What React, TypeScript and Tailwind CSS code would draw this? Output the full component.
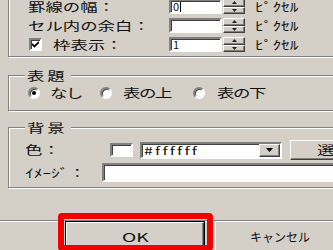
import React from 'react';

// classic win9x bevels
const sunken =
  'border-2 border-t-[#808080] border-l-[#808080] border-b-white border-r-white shadow-[inset_1px_1px_0_#404040] bg-white';
const raised =
  'border border-t-white border-l-white border-b-[#404040] border-r-[#404040] shadow-[inset_-1px_-1px_0_#808080] bg-[#d4d0c8]';

const Wide: React.FC<{ children: React.ReactNode; className?: string }> = ({ children, className = '' }) => (
  <span className={`inline-block origin-left scale-x-[1.45] whitespace-nowrap ${className}`}>{children}</span>
);

const Group: React.FC<{ legend?: string; className?: string; children: React.ReactNode }> = ({
  legend,
  className = '',
  children,
}) => (
  <div
    className={`flex w-[340px] shrink-0 flex-col border border-[#808080] shadow-[1px_1px_0_#fff,inset_1px_1px_0_#fff] ${className}`}
  >
    {legend && (
      <div className="-mt-[7px] ml-[16px] h-[14px] w-[46px] bg-[#d4d0c8] px-[2px] text-[12px] leading-[14px]">
        <Wide className="tracking-[2px]">{legend}</Wide>
      </div>
    )}
    {children}
  </div>
);

const Spinner = () => (
  <div className="ml-[1px] flex h-[15px] w-[22px] shrink-0 flex-col">
    <div className={`flex flex-1 items-center justify-center ${raised}`}>
      <svg width="5" height="3" viewBox="0 0 5 3">
        <path d="M2.5 0 L5 3 L0 3 Z" fill="#222" />
      </svg>
    </div>
    <div className={`flex flex-1 items-center justify-center ${raised}`}>
      <svg width="5" height="3" viewBox="0 0 5 3">
        <path d="M0 0 L5 0 L2.5 3 Z" fill="#222" />
      </svg>
    </div>
  </div>
);

const NumField: React.FC<{ value?: string; caret?: boolean }> = ({ value = '', caret }) => (
  <div className={`flex h-[15px] w-[53px] shrink-0 items-center pl-[2px] text-[11px] leading-none ${sunken}`}>
    <span>{value}</span>
    {caret && <span className="ml-[1px] h-[10px] w-[1px] bg-black" />}
  </div>
);

const Radio: React.FC<{ checked?: boolean }> = ({ checked }) => (
  <div className="flex h-[12px] w-[12px] shrink-0 items-center justify-center rounded-full border-2 border-t-[#808080] border-l-[#808080] border-b-white border-r-white bg-white shadow-[inset_1px_1px_0_#404040]">
    {checked && <div className="h-[4px] w-[4px] rounded-full bg-black" />}
  </div>
);

const Pixel = () => (
  <div className="ml-[10px] shrink-0">
    <Wide className="scale-x-[1.3]">ﾋﾟｸｾﾙ</Wide>
  </div>
);

export default function App() {
  return (
    <div className="relative flex h-[250px] w-[333px] flex-col overflow-hidden bg-[#d4d0c8] pl-[8px] font-['Noto_Sans_CJK_JP','Noto_Sans',sans-serif] text-[#111]">
      {/* 罫線 group (top cut off) */}
      <Group className="-mt-[11px] pt-[9px] pb-[4px]">
        <div className="flex flex-col gap-[4px] pl-[19px] text-[12px]">
          <div className="flex h-[15px] items-center">
            <div className="w-[141px] shrink-0">
              <Wide>罫線の幅：</Wide>
            </div>
            <NumField value="0" caret />
            <Spinner />
            <Pixel />
          </div>
          <div className="flex h-[15px] items-center">
            <div className="w-[141px] shrink-0">
              <Wide>セル内の余白：</Wide>
            </div>
            <NumField />
            <Spinner />
            <Pixel />
          </div>
          <div className="flex h-[15px] items-center">
            <div className="flex w-[141px] shrink-0 items-center">
              <div className={`ml-[1px] flex h-[13px] w-[13px] items-center justify-center ${sunken}`}>
                <svg width="7" height="7" viewBox="0 0 7 7">
                  <path d="M0 3 L2.5 5.5 L7 1" stroke="#000" strokeWidth="1.8" fill="none" />
                </svg>
              </div>
              <div className="ml-[11px]">
                <Wide>枠表示：</Wide>
              </div>
            </div>
            <NumField value="1" />
            <Spinner />
            <Pixel />
          </div>
        </div>
      </Group>

      {/* 表題 */}
      <Group legend="表題" className="mt-[18px] pb-[9px]">
        <div className="mt-[2px] flex h-[16px] items-center pl-[19px] text-[12px]">
          <div className="flex w-[72px] shrink-0 items-center">
            <Radio checked />
            <div className="ml-[10px]">
              <Wide className="tracking-[-1px]">なし</Wide>
            </div>
          </div>
          <div className="flex w-[93px] shrink-0 items-center">
            <Radio />
            <div className="ml-[11px]">
              <Wide className="tracking-[-1px]">表の上</Wide>
            </div>
          </div>
          <div className="flex shrink-0 items-center">
            <Radio />
            <div className="ml-[12px]">
              <Wide className="tracking-[-1px]">表の下</Wide>
            </div>
          </div>
        </div>
      </Group>

      {/* 背景 */}
      <Group legend="背景" className="mt-[16px] pb-[5px]">
        <div className="mt-[5px] flex h-[20px] items-center pl-[16px] text-[12px]">
          <div className="w-[85px] shrink-0">
            <Wide>色：</Wide>
          </div>
          <div className={`h-[14px] w-[23px] shrink-0 ${sunken}`} />
          <div className={`ml-[7px] flex h-[17px] w-[142px] shrink-0 items-center ${sunken}`}>
            <div className="flex-1 pl-[2px] text-[11px] leading-none">
              <Wide className="tracking-[1.5px]">#ffffff</Wide>
            </div>
            <div className={`flex h-full w-[21px] shrink-0 items-center justify-center ${raised}`}>
              <svg width="7" height="4" viewBox="0 0 7 4">
                <path d="M0 0 L7 0 L3.5 4 Z" fill="#000" />
              </svg>
            </div>
          </div>
          <div className={`ml-[8px] flex h-[20px] w-[80px] shrink-0 items-center pl-[26px] ${raised}`}>
            <Wide>選択</Wide>
          </div>
        </div>
        <div className="mt-[3px] flex h-[19px] items-center pl-[16px] text-[12px]">
          <div className="w-[77px] shrink-0">
            <Wide className="scale-x-[1.3]">ｲﾒｰｼﾞ：</Wide>
          </div>
          <div className={`h-[19px] flex-1 ${sunken}`} />
        </div>
      </Group>

      {/* separator */}
      <div className="-ml-[8px] mt-[32px] h-[2px] w-[345px] shrink-0 border-t border-b border-t-[#808080] border-b-white" />

      {/* buttons */}
      <div className="-mt-[1px] ml-[57px] flex shrink-0 gap-[10px] text-[12px]">
        <div className="flex h-[32px] w-[140px] shrink-0 items-center justify-center border border-black">
          <div className={`flex h-full w-full items-center justify-center ${raised}`}>
            <span className="inline-block origin-center scale-x-[1.6]">OK</span>
          </div>
        </div>
        <div className={`flex h-[32px] w-[130px] shrink-0 items-center justify-center ${raised}`}>
          <span>キャンセル</span>
        </div>
      </div>

      {/* red highlight */}
      <div className="absolute left-[58px] top-[213px] h-[38px] w-[155px] rounded-[4px] border-[6px] border-[#f00000]" />
    </div>
  );
}
